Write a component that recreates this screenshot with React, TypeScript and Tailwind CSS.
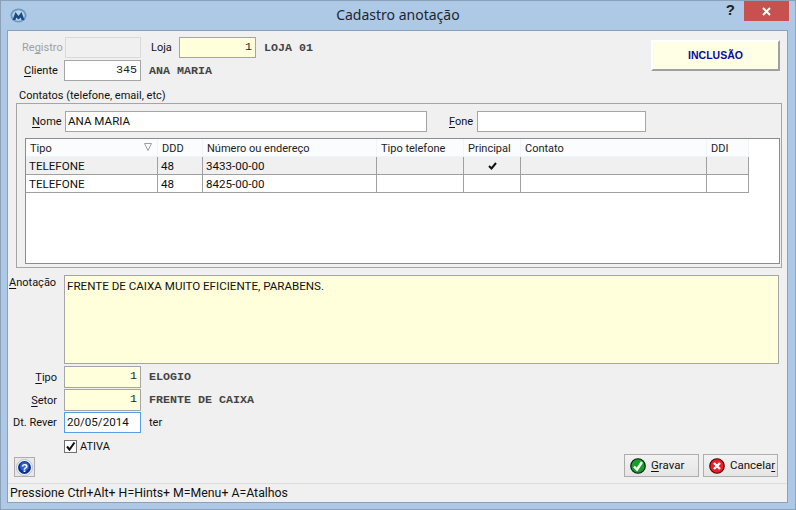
const sans = "font-['Roboto',Arial,sans-serif]"

const Caption = () => {
  return (
    <div className="relative flex h-[29px] items-center bg-[#adc9e6]">
      <svg className="mb-[1px] ml-[9px] h-[15px] w-[17px]" viewBox="0 0 17 15">
        <ellipse cx="8.5" cy="7.5" rx="8" ry="7" fill="#6c98c6" />
        <ellipse cx="8.5" cy="7.5" rx="6.2" ry="5.2" fill="#bcd3ea" />
        <path d="M2.5 12 L5.5 4 L8.5 8 L11.5 4 L14.5 12 L11.5 12 L10.8 9.5 L8.5 11.5 L6.2 9.5 L5.5 12 Z" fill="#1d4a80" />
      </svg>
      <div className="flex-1 pb-[2px] pl-[43px] text-center font-['Noto_Sans',sans-serif] text-[14px] text-[#1c2733]">
        Cadastro anotação
      </div>
      <span className="mr-[9px] mb-[10px] font-['Liberation_Sans',sans-serif] text-[15px] font-bold text-[#222]">?</span>
      <div className="mr-[6px] mb-[9px] flex h-[20px] w-[45px] items-center justify-center bg-[#c75050]">
        <svg className="h-[9px] w-[9px]" viewBox="0 0 9 9">
          <path d="M1 1 L8 8 M8 1 L1 8" stroke="#fff" strokeWidth="2" />
        </svg>
      </div>
    </div>
  )
}

const Label = ({ children, className = '' }: { children: React.ReactNode; className?: string }) => {
  return <span className={`text-[11px] leading-none ${className || 'text-[#111]'}`}>{children}</span>
}

const Key = ({ children }: { children: string }) => <span className="underline underline-offset-2">{children}</span>

const Field = ({ value = '', focused = false, className = '' }: { value?: string; focused?: boolean; className?: string }) => {
  return (
    <div className={`flex items-center border px-[2px] text-[11.6px] leading-none text-[#111] ${focused ? 'border-[#569de5]' : 'border-[#a5a5a5]'} ${className}`}>
      {value}
    </div>
  )
}

const CodeField = ({ value, className = '' }: { value: string; className?: string }) => {
  return (
    <div className={`flex w-[77px] items-center justify-end border border-[#a5a5a5] pr-[3px] font-['Liberation_Mono',monospace] text-[11.67px] leading-none text-[#222] ${className}`}>
      {value}
    </div>
  )
}

const Mono = ({ children, className = '' }: { children: string; className?: string }) => {
  return <span className={`mt-[2px] font-['Liberation_Mono',monospace] text-[11.67px] leading-none font-bold text-[#444] ${className}`}>{children}</span>
}

const columns = [
  { name: 'Tipo', width: 'w-[132px]' },
  { name: 'DDD', width: 'w-[45px]' },
  { name: 'Número ou endereço', width: 'w-[174px]' },
  { name: 'Tipo telefone', width: 'w-[87px]' },
  { name: 'Principal', width: 'w-[57px]' },
  { name: 'Contato', width: 'w-[186px]' },
  { name: 'DDI', width: 'w-[42px]' },
]

const rows = [
  { numero: '3433-00-00', principal: true, bg: 'bg-[#f0f0f0]' },
  { numero: '8425-00-00', principal: false, bg: 'bg-white' },
]

const Grid = () => {
  return (
    <div className="ml-[8px] mt-[6px] h-[126px] w-[755px] border border-[#8c8c8c] bg-white">
      <div className="flex h-[18px]">
        {columns.map((col, i) => (
          <div
            key={col.name}
            className={`relative flex items-center border-r border-b border-[#eef4fb] bg-[#fbfcfe] pt-[1px] pl-[4px] text-[11px] leading-none text-[#222] ${col.width}`}
          >
            {col.name}
            {i === 0 && (
              <svg className="absolute top-[4px] right-[5px] h-[8px] w-[8px]" viewBox="0 0 8 8">
                <path d="M0.5 0.5 H7.5 L4 7.5 Z" fill="none" stroke="#9a9fa8" />
              </svg>
            )}
          </div>
        ))}
      </div>
      {rows.map(row => (
        <div key={row.numero} className={`flex h-[18px] w-[723px] border-b border-[#a0a0a0] ${row.bg}`}>
          <div className="flex w-[132px] items-center border-r border-[#a0a0a0] pt-[3px] pl-[3px] text-[11.6px] leading-none text-[#111]">TELEFONE</div>
          <div className="flex w-[45px] items-center border-r border-[#a0a0a0] pt-[3px] pl-[3px] text-[11.6px] leading-none text-[#111]">48</div>
          <div className="flex w-[174px] items-center border-r border-[#a0a0a0] pt-[3px] pl-[3px] text-[11.6px] leading-none text-[#111]">{row.numero}</div>
          <div className="w-[87px] border-r border-[#a0a0a0]" />
          <div className="flex w-[57px] items-center justify-center border-r border-[#a0a0a0]">
            {row.principal && (
              <svg className="h-[8px] w-[9px]" viewBox="0 0 9 8">
                <path d="M1 4 L3.5 6.5 L8 1" fill="none" stroke="#111" strokeWidth="2" />
              </svg>
            )}
          </div>
          <div className="w-[186px] border-r border-[#a0a0a0]" />
          <div className="w-[42px] border-r border-[#a0a0a0]" />
        </div>
      ))}
    </div>
  )
}

const Button = ({ icon, children }: { icon: React.ReactNode; children: React.ReactNode }) => {
  return (
    <div className="flex h-[23px] w-[75px] items-center gap-[5px] border border-[#adadad] bg-gradient-to-b from-[#f2f2f2] to-[#e5e5e5] pl-[5px] text-[11.5px] leading-none text-[#111]">
      {icon}
      <span>{children}</span>
    </div>
  )
}

const App = () => {
  return (
    <div className={`flex h-[510px] w-[796px] flex-col overflow-hidden border border-[#8ba1ba] bg-[#adc9e6] ${sans}`}>
      <Caption />
      <div className="mx-[6px] flex h-[473px] w-[781px] flex-col border border-[#8ba1ba] bg-[#f0f0f0] pt-[6px]">
        <div className="flex h-[44px]">
          <div className="flex w-[643px] flex-col gap-[2px]">
            <div className="flex h-[21px] items-center">
              <Label className="ml-[14px] w-[43px] text-[#a0a0a0]">Re<Key>g</Key>istro</Label>
              <div className="h-[21px] w-[76px] border border-[#d9d9d9] bg-[#f0f0f0]" />
              <Label className="ml-[10px] w-[28px] text-[#111]">Loja</Label>
              <CodeField value="1" className="h-[21px] bg-[#ffffdc]" />
              <Mono className="ml-[8px]">LOJA 01</Mono>
            </div>
            <div className="flex h-[21px] items-center">
              <Label className="ml-[16px] w-[40px] text-[#111]"><Key>C</Key>liente</Label>
              <CodeField value="345" className="h-[21px] bg-white" />
              <Mono className="ml-[8px]">ANA MARIA</Mono>
            </div>
          </div>
          <div className="mt-[3px] flex h-[31px] w-[129px] items-center justify-center border-2 border-t-white border-l-white border-r-[#a0a0a0] border-b-[#a0a0a0] bg-[#ffffe6] font-['Liberation_Sans',sans-serif] text-[10.5px] font-bold text-[#0a0a9a]">
            INCLUSÃO
          </div>
        </div>

        <Label className="ml-[11px] mt-[9px] text-[#111]">Contatos (telefone, email, etc)</Label>

        <div className="ml-[8px] mt-[2px] h-[165px] w-[766px] border border-[#a5a5a5] pt-[7px]">
          <div className="flex h-[21px] items-center">
            <Label className="ml-[15px] w-[33px] text-[#111]"><Key>N</Key>ome</Label>
            <Field value="ANA MARIA" className="h-[21px] w-[362px] bg-white" />
            <Label className="ml-[22px] w-[28px] text-[#111]"><Key>F</Key>one</Label>
            <Field className="h-[21px] w-[169px] bg-white" />
          </div>
          <Grid />
        </div>

        <div className="mt-[7px] flex h-[89px]">
          <Label className="ml-[1px] mt-[2px] w-[55px] text-[#111]"><Key>A</Key>notação</Label>
          <div className="h-[89px] w-[715px] border border-[#a5a5a5] bg-[#ffffdc] px-[2px] pt-[3px] text-[11.6px] leading-[14px] text-[#111]">
            FRENTE DE CAIXA MUITO EFICIENTE, PARABENS.
          </div>
        </div>

        <div className="mt-[2px] flex h-[22px] items-center">
          <Label className="w-[49px] text-right text-[#111]"><Key>T</Key>ipo</Label>
          <CodeField value="1" className="ml-[7px] h-[22px] bg-[#ffffdc]" />
          <Mono className="ml-[8px]">ELOGIO</Mono>
        </div>
        <div className="mt-px flex h-[22px] items-center">
          <Label className="w-[49px] text-right text-[#111]"><Key>S</Key>etor</Label>
          <CodeField value="1" className="ml-[7px] h-[22px] bg-[#ffffdc]" />
          <Mono className="ml-[8px]">FRENTE DE CAIXA</Mono>
        </div>
        <div className="mt-px flex h-[21px] items-center">
          <Label className="ml-[5px] w-[51px] text-[#111]">Dt. Rever</Label>
          <Field value="20/05/2014" focused className="h-[21px] w-[77px] bg-white" />
          <Label className="ml-[8px] text-[#111]">ter</Label>
        </div>
        <div className="ml-[56px] mt-[6px] flex h-[15px] items-center gap-[3px]">
          <div className="flex h-[13px] w-[13px] items-center justify-center border border-[#707070] bg-white">
            <svg className="h-[11px] w-[11px]" viewBox="0 0 11 11">
              <path d="M2 5.5 L4.5 8.5 L9.5 1.5" fill="none" stroke="#111" strokeWidth="2" />
            </svg>
          </div>
          <Label className="text-[#111]">ATIVA</Label>
        </div>

        <div className="relative flex flex-1 items-start justify-end gap-[4px] pr-[9px]">
          <div className="absolute top-[3px] left-[6px] flex h-[20px] w-[21px] items-center justify-center border border-[#adadad] bg-[#e8e8e8]">
            <svg className="h-[17px] w-[17px]" viewBox="0 0 17 17">
              <circle cx="8.5" cy="8.5" r="8" fill="#f4f6fa" stroke="#b8c0cc" />
              <circle cx="8.5" cy="8.5" r="6.5" fill="#102f8c" />
              <circle cx="8.5" cy="7.5" r="4.5" fill="#2d5fd0" />
              <text x="8.5" y="12.5" textAnchor="middle" fontSize="11" fontWeight="700" fontFamily="Liberation Sans, sans-serif" fill="#fff">?</text>
            </svg>
          </div>
          <Button
            icon={
              <svg className="h-[16px] w-[16px]" viewBox="0 0 16 16">
                <circle cx="8" cy="8" r="7.25" fill="#16a02a" stroke="#0a1f0c" strokeWidth="1.2" />
                <path d="M4 8.5 L7 11.5 L12 4" fill="none" stroke="#fff" strokeWidth="2.4" />
              </svg>
            }
          >
            <Key>G</Key>ravar
          </Button>
          <Button
            icon={
              <svg className="h-[16px] w-[16px]" viewBox="0 0 16 16">
                <circle cx="8" cy="8" r="7.25" fill="#ee1c25" stroke="#4a0808" strokeWidth="1.2" />
                <path d="M5 5 L11 11 M11 5 L5 11" fill="none" stroke="#fff" strokeWidth="2.4" />
              </svg>
            }
          >
            Cancela<Key>r</Key>
          </Button>
        </div>

        <div className="flex h-[19px] items-center border-t border-[#dcdcdc] pl-[2px] text-[12.3px] leading-none text-[#111]">
          Pressione Ctrl+Alt+ H=Hints+ M=Menu+ A=Atalhos
        </div>
      </div>
    </div>
  )
}

export default App
